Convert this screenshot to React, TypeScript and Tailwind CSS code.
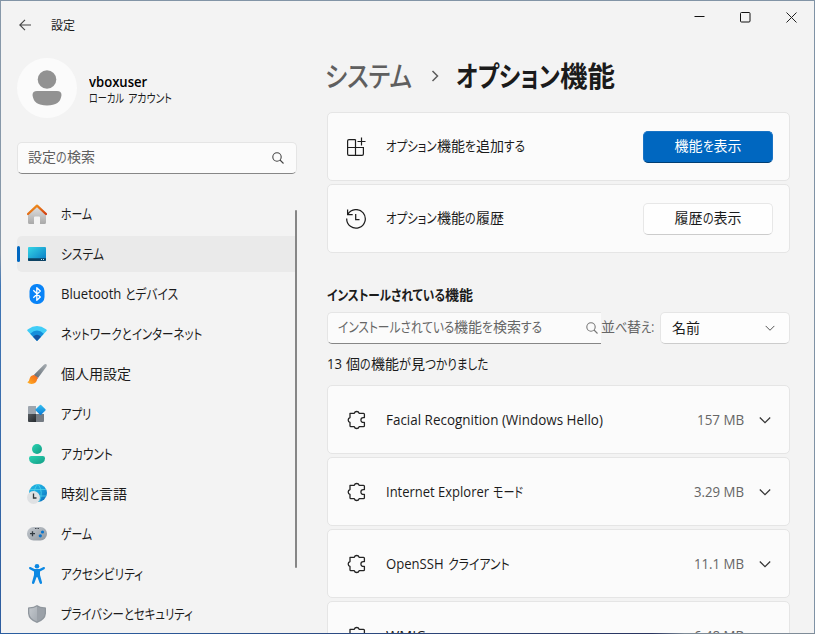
import { useLayoutEffect, useRef, type ReactNode } from "react";

type Part = [string, number];

// One run of text, condensed or widened horizontally to a set advance width.
function Run({ text, w }: { text: string; w: number }) {
  const ref = useRef<HTMLSpanElement>(null);
  useLayoutEffect(() => {
    const el = ref.current;
    if (el) el.style.transform = `scaleX(${w / el.offsetWidth})`;
  }, [text, w]);
  return (
    <span className="inline-block" style={{ width: w }}>
      <span ref={ref} className="inline-block origin-left whitespace-pre">{text}</span>
    </span>
  );
}

function Text({ parts, className = "" }: { parts: Part[]; className?: string }) {
  return (
    <span className={`flex shrink-0 whitespace-pre ${className}`}>
      {parts.map(([t, w], i) => <Run key={i} text={t} w={w} />)}
    </span>
  );
}

const HomeIcon = () => (
  <svg width="20" height="20" viewBox="0 0 20 20">
    <defs>
      <linearGradient id="hm" x1="0" y1="0" x2="0" y2="1"><stop stopColor="#e4e4e4" /><stop offset="1" stopColor="#a9a9a9" /></linearGradient>
      <linearGradient id="hr" x1="0" y1="0" x2="1" y2="1"><stop stopColor="#f5a01e" /><stop offset="1" stopColor="#d23c10" /></linearGradient>
    </defs>
    <path d="M1 9L10 1.500L19 9V18.500Q19 20 17.500 20H13V13.500Q13 12.500 12 12.500H8Q7 12.500 7 13.500V20H2.500Q1 20 1 18.500Z" fill="url(#hm)" />
    <path d="M1 10L10 1.700L19 10" fill="none" stroke="url(#hr)" strokeWidth="2.300" strokeLinecap="round" strokeLinejoin="round" />
  </svg>
);

const SystemIcon = () => (
  <svg width="20" height="20" viewBox="0 0 20 20">
    <defs><linearGradient id="sy" x1="0" y1="0" x2="1" y2="1"><stop stopColor="#35d6e6" /><stop offset="1" stopColor="#0878c4" /></linearGradient></defs>
    <rect x="1" y="3" width="18" height="14" rx="1" fill="url(#sy)" />
    <path d="M1 14.300H19V16Q19 17 18 17H2Q1 17 1 16Z" fill="#0d4263" />
    <path d="M14 15.500h1M16 15.500h1" stroke="#bde6f5" />
  </svg>
);

const BluetoothIcon = () => (
  <svg width="20" height="20" viewBox="0 0 20 20">
    <rect x="2.500" y="0" width="15" height="20" rx="7" fill="#0883f7" />
    <path d="M6.300 6.300L13.300 13L9.800 16.300V3.700L13.300 7L6.300 13.700" fill="none" stroke="#fff" strokeWidth="1.300" strokeLinejoin="round" />
  </svg>
);

const WifiIcon = () => (
  <svg width="20" height="20" viewBox="0 0 20 20">
    <path d="M10 17L0.300 6.800Q0 6 1 5.300Q10 -1.200 19 5.300Q20 6 19.700 6.800Z" fill="#40cdf7" />
    <path d="M10 17L3.200 9.800Q10 3 16.800 9.800Z" fill="#168edb" />
    <path d="M10 17L6 12.800Q10 8.800 14 12.800Z" fill="#1555a5" />
  </svg>
);

const BrushIcon = () => (
  <svg width="20" height="20" viewBox="0 0 20 20">
    <defs>
      <linearGradient id="bh" x1="1" y1="0" x2="0" y2="1"><stop stopColor="#a9afb4" /><stop offset="1" stopColor="#5f6972" /></linearGradient>
      <linearGradient id="bt" x1="1" y1="0" x2="0" y2="1"><stop offset="0.100" stopColor="#f5701f" /><stop offset="0.500" stopColor="#fa8a1c" /><stop offset="1" stopColor="#ffb629" /></linearGradient>
    </defs>
    <path d="M6.800 11L16.700 1Q18.500 -0.600 19.600 0.500Q20.300 1.500 19 3.200L11 14Z" fill="url(#bh)" />
    <path d="M6.800 11L11 14L10 15.500L5.800 12Z" fill="#e4502a" />
    <path d="M6.500 11.300Q9.800 11.800 10.200 14.500Q9.800 20 4.500 19.900Q2 20 0.300 18.300Q2.300 17.500 2.500 15Q3.300 11.500 6.500 11.300Z" fill="url(#bt)" />
  </svg>
);

const AppsIcon = () => (
  <svg width="20" height="20" viewBox="0 0 20 20">
    <defs>
      <linearGradient id="ap" x1="0" y1="0" x2="1" y2="1"><stop stopColor="#35c1f1" /><stop offset="1" stopColor="#0878d4" /></linearGradient>
      <linearGradient id="ag" x1="0" y1="0" x2="1" y2="1"><stop stopColor="#565b60" /><stop offset="1" stopColor="#252a2e" /></linearGradient>
    </defs>
    <path d="M1 3Q1 2 2 2H9V10H1Z" fill="#9da5ae" />
    <path d="M1 10H9V18H2Q1 18 1 17Z" fill="url(#ag)" />
    <path d="M9 10H17V17Q17 18 16 18H9Z" fill="#747b83" />
    <rect x="9.700" y="2" width="7.700" height="7.700" rx="0.800" transform="rotate(45 13.550 5.850)" fill="url(#ap)" />
  </svg>
);

const AccountIcon = () => (
  <svg width="20" height="20" viewBox="0 0 20 20">
    <defs><linearGradient id="ac" x1="0" y1="0" x2="1" y2="1"><stop stopColor="#2bd3b2" /><stop offset="1" stopColor="#119c84" /></linearGradient></defs>
    <circle cx="10" cy="5" r="5" fill="url(#ac)" />
    <path d="M4.200 12H15.800Q18 12 18 14.200Q18 20 10 20Q2 20 2 14.200Q2 12 4.200 12Z" fill="url(#ac)" />
  </svg>
);

const TimeIcon = () => (
  <svg width="20" height="20" viewBox="0 0 20 20">
    <defs><linearGradient id="tm" x1="0" y1="0" x2="1" y2="1"><stop stopColor="#22b8e0" /><stop offset="0.500" stopColor="#1aa3dc" /><stop offset="1" stopColor="#0867b8" /></linearGradient></defs>
    <circle cx="11" cy="9" r="9" fill="url(#tm)" />
    <path d="M3 5.500H19M3 12H19M11 0Q5.500 5 7.500 15M11 0Q17 8 12 18" fill="none" stroke="#4fd2ea" strokeWidth="0.800" />
    <circle cx="6.500" cy="13.500" r="6.500" fill="#dfe1e3" />
    <path d="M6.500 9.500V14H9.500" fill="none" stroke="#33373b" strokeWidth="1.300" />
  </svg>
);

const GameIcon = () => (
  <svg width="20" height="20" viewBox="0 0 20 20">
    <defs><linearGradient id="gm" x1="0" y1="0" x2="1" y2="1"><stop stopColor="#c4c9cf" /><stop offset="1" stopColor="#8e969e" /></linearGradient></defs>
    <rect x="0" y="3" width="20" height="13.500" rx="6.500" fill="url(#gm)" />
    <path d="M3 9.700H8M5.500 7.200V12.200" stroke="#333b42" strokeWidth="1.300" />
    <path d="M8 4.500h1.500M10.500 4.500h1.500" stroke="#424950" />
    <circle cx="15.500" cy="8" r="1.600" fill="#0874cd" /><circle cx="13.300" cy="11.800" r="1.600" fill="#0874cd" />
  </svg>
);

const AccessIcon = () => (
  <svg width="20" height="20" viewBox="0 0 20 20" fill="#0c88e3">
    <circle cx="10" cy="2.300" r="2.300" />
    <path d="M3.500 3.100L7.500 5H12.500L16.500 3.100Q17.700 2.800 18 3.800Q18.200 4.700 17.300 5.200L13 7.400V11L15 18.300Q15.200 19.500 14.200 19.900Q13 20.100 12.600 19L10.600 13.500Q10 12.500 9.400 13.500L7.400 19Q7 20.100 5.800 19.900Q4.800 19.500 5 18.300L7 11V7.400L2.700 5.200Q1.800 4.700 2 3.800Q2.300 2.800 3.500 3.100Z" />
  </svg>
);

const ShieldIcon = () => (
  <svg width="20" height="20" viewBox="0 0 20 20">
    <defs><linearGradient id="sh" x1="0" y1="0" x2="1" y2="1"><stop stopColor="#c3c8cd" /><stop offset="1" stopColor="#a5abb2" /></linearGradient></defs>
    <path d="M10 1Q13.500 3.500 18 3.300Q19 3.300 19 4.200V9.500Q18.500 16 10 19Q1.500 16 1 9.500V4.200Q1 3.300 2 3.300Q6.500 3.500 10 1Z" fill="#8f969d" />
    <path d="M10 2.500Q13.500 4.600 17.700 4.500V9.500Q17 15 10 17.600Z" fill="#9ba1a8" />
    <path d="M10 2.500Q6.500 4.600 2.300 4.500V9.500Q3 15 10 17.600Z" fill="url(#sh)" />
  </svg>
);

const SearchIcon = ({ className = "" }: { className?: string }) => (
  <svg width="12" height="12" viewBox="0 0 12 12" fill="none" stroke="currentColor" strokeWidth="1.100" className={className}>
    <circle cx="5" cy="5" r="4.200" /><path d="M8 8L11.500 11.500" />
  </svg>
);

const Chevron = ({ size, className = "" }: { size: number; className?: string }) => (
  <svg width={size} height={size} viewBox="0 0 12 12" fill="none" stroke="currentColor" strokeWidth="1.200" className={className}>
    <path d="M0.800 3.500L6 8.700L11.200 3.500" />
  </svg>
);

const AddIcon = () => (
  <svg width="20" height="20" viewBox="0 0 20 20" fill="none" stroke="#1d1d1d" strokeWidth="1.200">
    <path d="M9.500 2.600H3Q1.600 2.600 1.600 4V17Q1.600 18.400 3 18.400H16Q17.400 18.400 17.400 17V10.500H1.600M9.500 2.600V18.400M15.500 0.500V8.500M11.500 4.500H19.500" />
  </svg>
);

const HistoryIcon = () => (
  <svg width="20" height="20" viewBox="0 0 20 20" fill="none" stroke="#1d1d1d" strokeWidth="1.250">
    <path d="M1.600 0.500V5.600H6.700M1.900 5.300A9.300 9.300 0 1 1 0.700 9.500M9.700 5V10.600H13.500" />
  </svg>
);

const PuzzleIcon = () => (
  <svg width="20" height="20" viewBox="0 0 20 20" fill="none" stroke="#242424" strokeWidth="1.300" strokeLinejoin="round">
    <path d="M4 3.300H8.300A2.500 2.500 0 0 1 13.100 3.300H17.500Q18.400 3.300 18.400 4.200V7.600H17.300A2.400 2.400 0 0 0 17.300 12.400H18.400V15.800Q18.400 16.700 17.500 16.700H13.100A2.500 2.500 0 0 1 8.300 16.700H4.900Q4 16.700 4 15.800V12.400A2.500 2.500 0 0 1 4 7.600Z" />
  </svg>
);

const nav: { icon: ReactNode; parts: Part[] }[] = [
  { icon: <HomeIcon />, parts: [["ホーム", 31]] },
  { icon: <SystemIcon />, parts: [["システム", 43]] },
  { icon: <BluetoothIcon />, parts: [["Bluetooth", 60], [" ", 4], ["とデバイス", 53]] },
  { icon: <WifiIcon />, parts: [["ネットワークとインターネット", 141]] },
  { icon: <BrushIcon />, parts: [["個人用設定", 70]] },
  { icon: <AppsIcon />, parts: [["アプリ", 30]] },
  { icon: <AccountIcon />, parts: [["アカウント", 52]] },
  { icon: <TimeIcon />, parts: [["時刻", 28], ["と", 10], ["言語", 28]] },
  { icon: <GameIcon />, parts: [["ゲーム", 31]] },
  { icon: <AccessIcon />, parts: [["アクセシビリティ", 82]] },
  { icon: <ShieldIcon />, parts: [["プライバシーとセキュリティ", 132]] },
];

const features: { parts: Part[]; size: Part }[] = [
  { parts: [["Facial Recognition (Windows Hello)", 217]], size: ["157 MB", 47] },
  { parts: [["Internet Explorer", 103], [" ", 4], ["モード", 30]], size: ["3.29 MB", 50] },
  { parts: [["OpenSSH", 58], [" ", 4], ["クライアント", 62]], size: ["11.1 MB", 50] },
  { parts: [["WMIC", 39]], size: ["6.48 MB", 50] },
];

const card = "flex h-[69px] shrink-0 items-center rounded-[5px] border border-[#e5e5e5] bg-[#fbfbfb] pl-[18px] pr-4";

export default function App() {
  return (
    <div className="flex h-[634px] w-[815px] flex-col overflow-hidden font-['Open_Sans','Noto_Sans_CJK_JP',sans-serif] text-sm leading-5 text-[#1b1b1b] [font-feature-settings:'palt']">
      <div className="h-px shrink-0 bg-[#8294a6]" />
      <div className="flex min-h-0 flex-1">
        <div className="w-px shrink-0 bg-gradient-to-b from-[#8798a9] from-40% via-[#3f76b5] via-45% to-[#2d5c9e]" />
        <div className="flex min-w-0 flex-1 overflow-hidden bg-[#f3f3f3]">
          <aside className="flex w-[296px] shrink-0 flex-col pl-4">
            <div className="flex h-12 items-center gap-5 pl-0.5">
              <svg width="12" height="12" viewBox="0 0 12 12" fill="none" stroke="#454545" strokeWidth="1.100"><path d="M12 6H0.800M6 0.800L0.800 6L6 11.200" /></svg>
              <Text parts={[["設定", 24]]} className="pt-0.5 text-xs" />
            </div>
            <div className="mt-2 flex h-[61px] items-center gap-3">
              <div className="flex size-[60px] items-center justify-center rounded-full bg-[#fbfbfb]">
                <svg width="30" height="36" viewBox="0 0 30 36" fill="#929292"><circle cx="15" cy="9.500" r="9.300" /><path d="M5 21H25Q29.500 21 29.500 25Q28.500 35.500 15 35.500Q1.500 35.500 0.500 25Q0.500 21 5 21Z" /></svg>
              </div>
              <div className="flex flex-col pt-1">
                <Text parts={[["vboxuser", 58]]} className="h-[18px] font-semibold leading-[18px] text-black" />
                <Text parts={[["ローカル", 35], [" ", 4], ["アカウント", 44]]} className="h-4 text-xs leading-4" />
              </div>
            </div>
            <div className="mt-6 flex h-8 w-[280px] shrink-0 items-center justify-between rounded-[5px] border border-b-[#868686] border-[#e5e5e5] bg-[#fbfbfb] pl-2.5 pr-3 text-[#5f5f5f]">
              <Text parts={[["設定", 28], ["の", 11], ["検索", 28]]} className="pb-0.5" />
              <SearchIcon className="text-[#444]" />
            </div>
            <div className="mt-[22px] flex min-h-0 flex-1">
              <nav className="flex w-[278px] shrink-0 flex-col gap-1">
                {nav.map((n, i) => (
                  <div key={i} className={i === 1 ? "flex h-9 shrink-0 items-center rounded-l-[5px] bg-[#eaeaea]" : "flex h-9 shrink-0 items-center"}>
                    <span className={i === 1 ? "h-4 w-[3px] rounded-full bg-[#0067c0]" : "h-4 w-[3px]"} />
                    <span className="ml-[7px] mr-3.5">{n.icon}</span>
                    <Text parts={n.parts} />
                  </div>
                ))}
              </nav>
              <div className="mt-[14px] h-[358px] w-0.5 rounded-full bg-[#868686]" />
            </div>
          </aside>
          <main className="flex min-w-0 flex-1 flex-col">
            <div className="flex h-8 shrink-0 justify-end gap-[35px] pr-[17px] pt-[11px]">
              <svg width="11" height="11" viewBox="0 0 11 11" stroke="#111"><path d="M0.500 4.500H10.500" /></svg>
              <svg width="11" height="11" viewBox="0 0 11 11" fill="none" stroke="#111"><rect x="0.500" y="0.500" width="9.500" height="9.500" rx="1" /></svg>
              <svg width="11" height="11" viewBox="0 0 11 11" stroke="#222"><path d="M0.500 0.500L10.500 10.500M10.500 0.500L0.500 10.500" /></svg>
            </div>
            <h1 className="flex h-[79px] shrink-0 items-center pb-[7px] pl-7 pt-3.5 text-[28px] font-semibold leading-9">
              <Text parts={[["システム", 87]]} className="font-medium text-[#5f5f5f]" />
              <svg width="8" height="12" viewBox="0 0 8 12" fill="none" stroke="#5c5c5c" strokeWidth="1.500" className="ml-[19px] mr-[17px]"><path d="M1.500 1L6.500 6L1.500 11" /></svg>
              <Text parts={[["オプション", 104], ["機能", 55]]} />
            </h1>
            <div className="flex w-[493px] flex-col gap-[3px] pl-[30px]">
              <div className={card}>
                <AddIcon />
                <Text parts={[["オプション", 51], ["機能", 28], ["を", 11], ["追加", 28], ["する", 21]]} className="ml-5 pb-0.5" />
                <button className="ml-auto flex h-8 w-[130px] items-center justify-center rounded-[5px] border border-[#1873c5] border-b-[#003e73] bg-[#0067c0] text-white">
                  <Text parts={[["機能", 28], ["を", 11], ["表示", 28]]} className="pb-0.5" />
                </button>
              </div>
              <div className={card}>
                <HistoryIcon />
                <Text parts={[["オプション", 51], ["機能", 28], ["の", 11], ["履歴", 28]]} className="ml-5 pb-0.5" />
                <button className="ml-auto flex h-8 w-[130px] items-center justify-center rounded-[5px] border border-[#e7e7e7] border-b-[#cccccc] bg-[#fefefe]">
                  <Text parts={[["履歴", 28], ["の", 11], ["表示", 28]]} className="pb-0.5" />
                </button>
              </div>
            </div>
            <div className="mt-8 flex h-[27px] shrink-0 items-start pl-[30px]">
              <Text parts={[["インストールされている", 118], ["機能", 28]]} className="font-semibold" />
            </div>
            <div className="flex h-8 w-[493px] shrink-0 items-center pl-[30px]">
              <div className="flex h-8 w-[274px] items-center justify-between rounded-l-[5px] border border-r-0 border-[#e5e5e5] border-b-[#868686] bg-[#fbfbfb] pl-2.5 pr-[3px] text-[#666]">
                <Text parts={[["インストールされている", 116], ["機能", 28], ["を", 11], ["検索", 28], ["する", 21]]} className="pb-0.5" />
                <SearchIcon className="text-[#777]" />
              </div>
              <Text parts={[["並", 14], ["べ", 12], ["替", 14], ["え:", 13]]} className="pb-0.5 text-[#666]" />
              <div className="ml-auto flex h-8 w-[130px] items-center justify-between rounded-[5px] border border-[#e5e5e5] border-b-[#cccccc] bg-[#fdfdfd] pl-[11px] pr-[14px]">
                <Text parts={[["名前", 28]]} />
                <Chevron size={10} className="text-[#555]" />
              </div>
            </div>
            <div className="flex h-[41px] shrink-0 items-center pb-0.5 pl-[30px]">
              <Text parts={[["13", 15], [" ", 4], ["個", 14], ["の", 11], ["機能", 28], ["が", 12], ["見", 14], ["つかりました", 63]]} />
            </div>
            <div className="flex w-[493px] flex-col gap-[3px] pl-[30px]">
              {features.map((f) => (
                <div key={f.parts[0][0]} className={card}>
                  <PuzzleIcon />
                  <Text parts={f.parts} className="ml-5" />
                  <Text parts={[f.size]} className="ml-auto mr-[15px] text-[#666]" />
                  <Chevron size={12} className="mr-0.5 text-[#333]" />
                </div>
              ))}
            </div>
          </main>
        </div>
        <div className="w-px shrink-0 bg-[#7f92a5]" />
      </div>
      <div className="h-px shrink-0 bg-gradient-to-r from-[#2b5ea0] from-10% via-[#2a3560] via-80% to-[#7f8c98] to-84%" />
    </div>
  );
}
